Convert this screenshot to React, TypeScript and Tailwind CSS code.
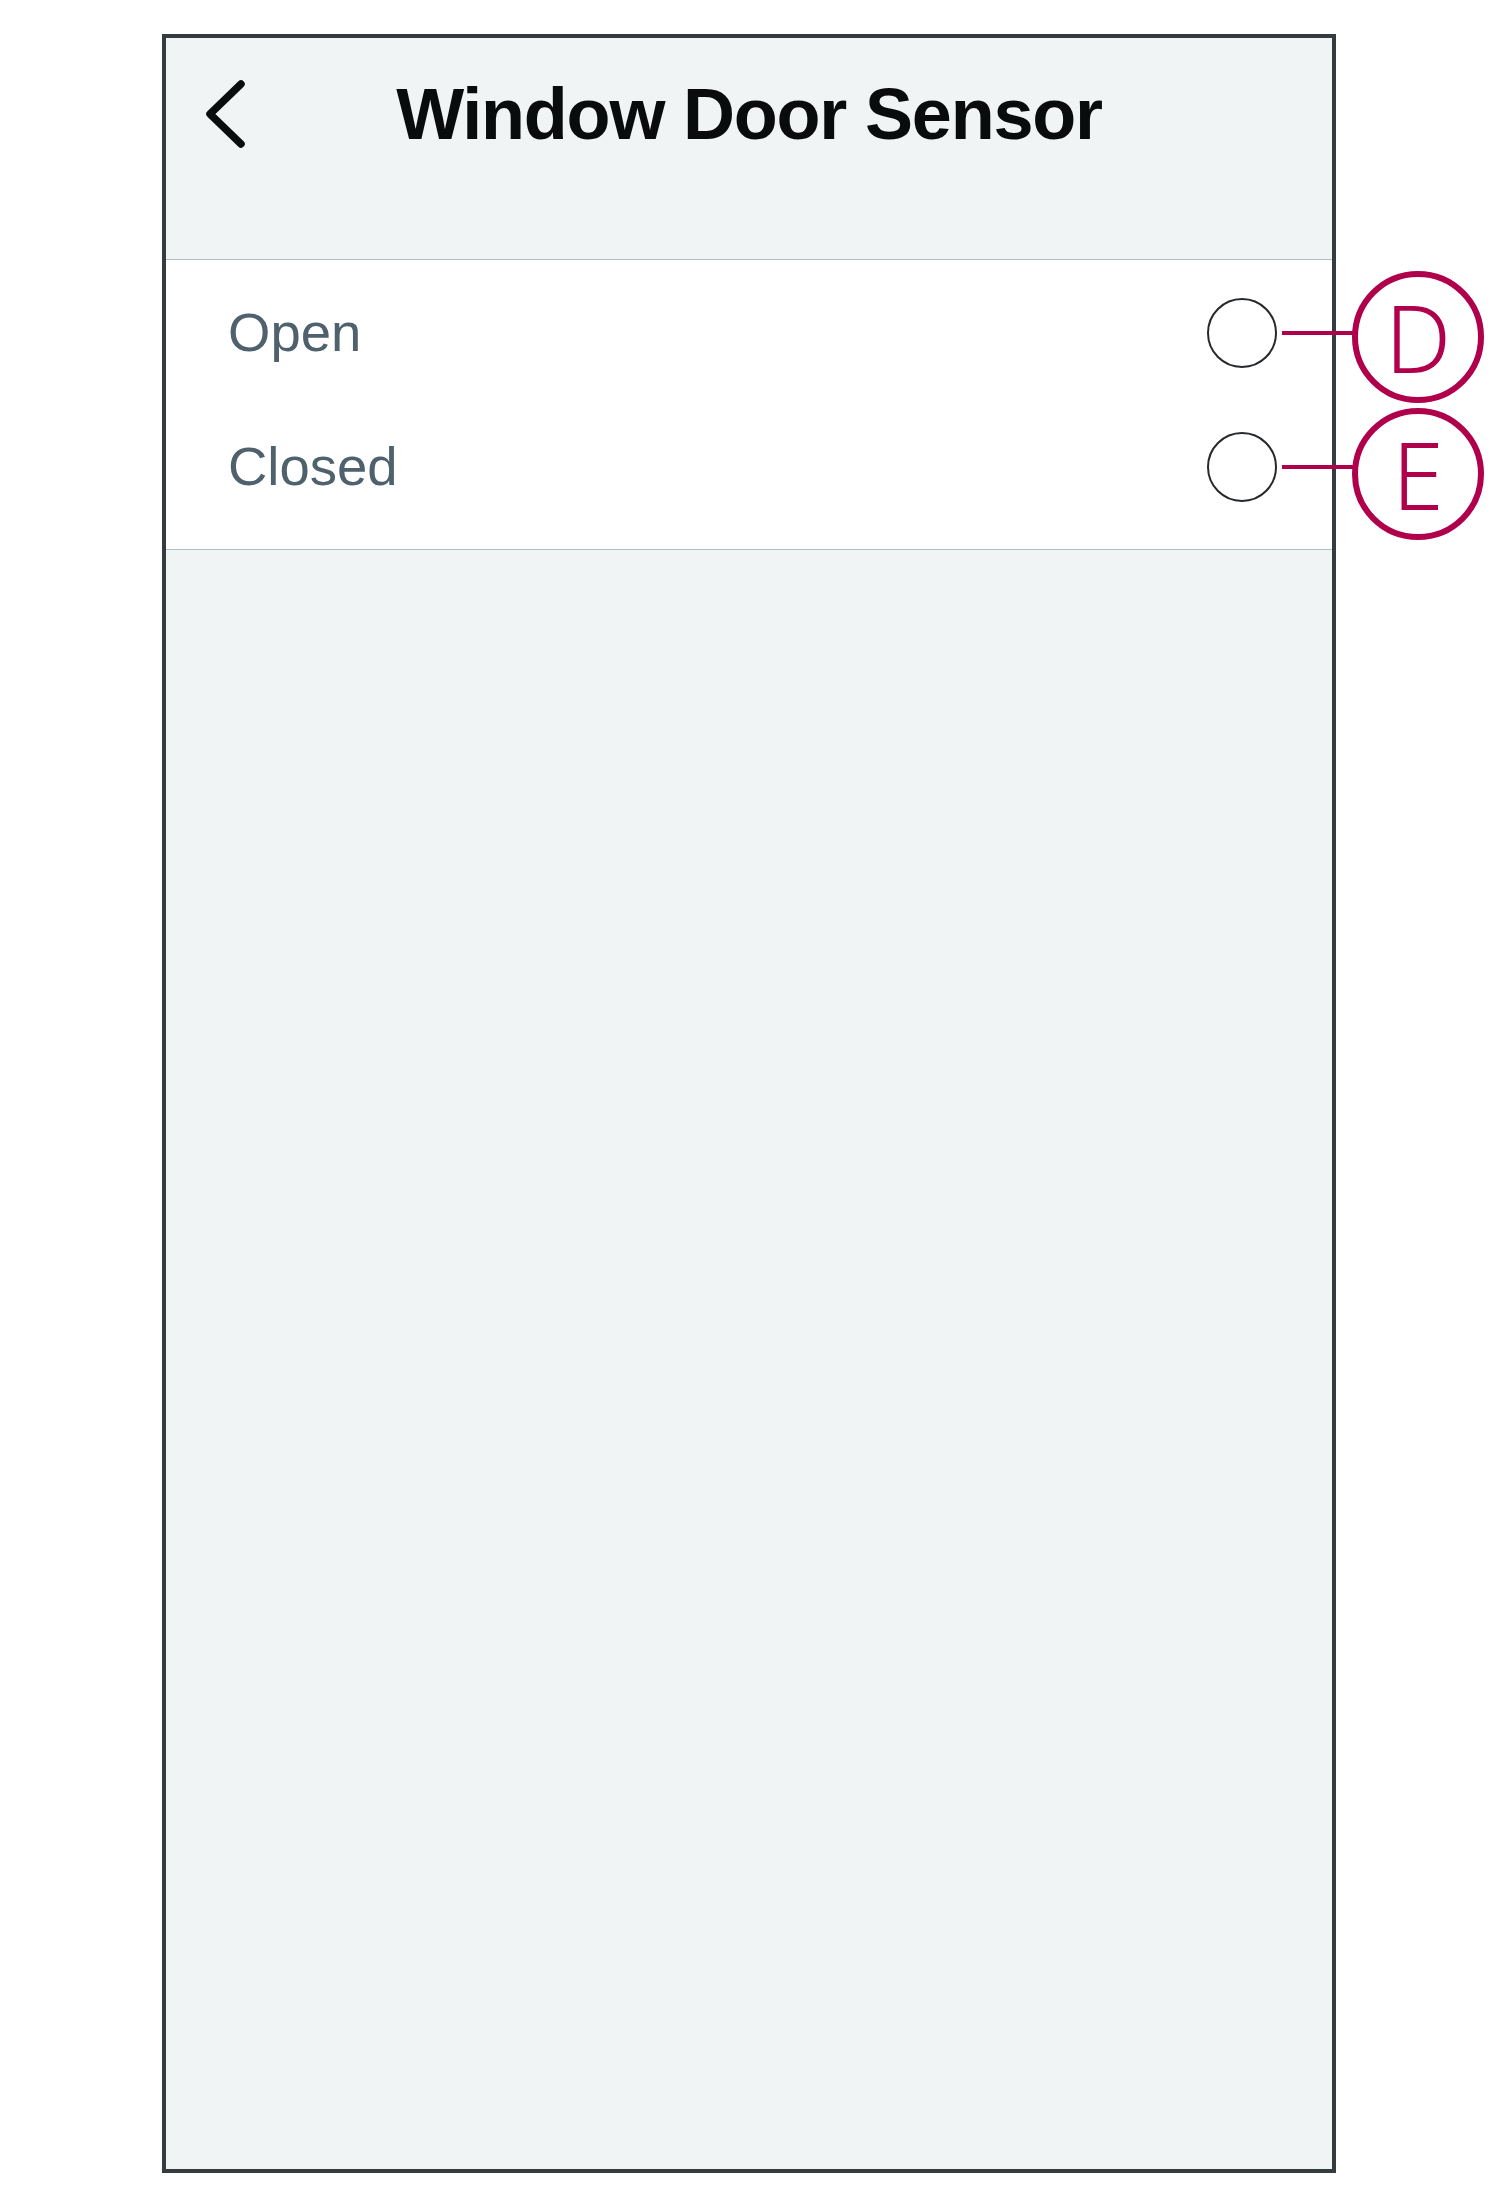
import React from 'react';

type Option = { label: string; tag: string; offset: string };

const options: Option[] = [
  { label: 'Open', tag: 'D', offset: 'top-[4px]' },
  { label: 'Closed', tag: 'E', offset: 'top-[7px]' },
];

const BackChevron: React.FC = () => (
  <svg width="42" height="70" viewBox="0 0 42 70" fill="none">
    <path d="M36 5 L5 35 L36 65" stroke="#0b0c0e" strokeWidth="7.5" strokeLinecap="round" strokeLinejoin="round" />
  </svg>
);

const OptionRow: React.FC<{ option: Option }> = ({ option }) => (
  <div className="relative flex h-[134px] items-center justify-between pl-[62px] pr-[55px]">
    <span className="text-[54.5px] leading-none text-[#4e616c]">{option.label}</span>
    <span className="h-[70px] w-[70px] rounded-full border-2 border-[#26292c] bg-white" />

    {/* annotation callout */}
    <div className="absolute left-[1116px] top-0 flex h-full items-center">
      <div className="h-[4px] w-[72px] bg-[#b0004b]" />
    </div>
    <div className={`absolute left-[1186px] ${option.offset} flex h-full items-center`}>
      <div className="flex h-[132px] w-[132px] items-center justify-center rounded-full border-[6px] border-[#b0004b] bg-white">
        <span className="text-[93px] font-light leading-none text-[#b0004b]" style={{ fontFamily: '"Noto Sans", sans-serif' }}>
          {option.tag}
        </span>
      </div>
    </div>
  </div>
);

const App: React.FC = () => {
  return (
    <div className="min-h-[2208px] w-full bg-white pt-[34px] pl-[162px]" style={{ fontFamily: '"Liberation Sans", Arial, sans-serif' }}>
      <div className="flex h-[2139px] w-[1174px] flex-col border-4 border-[#343c41] bg-[#f0f4f5]">
        {/* header */}
        <div className="h-[222px] border-b-[1.5px] border-[#aebfc6]">
          <div className="grid h-[152px] grid-cols-[1fr_auto_1fr] items-center">
            <div className="pl-[39px]">
              <BackChevron />
            </div>
            <h1 className="text-[72px] font-bold leading-none tracking-[-1.2px] text-[#0a0b0d]">Window Door Sensor</h1>
            <div />
          </div>
        </div>

        {/* options */}
        <div className="border-b-[1.5px] border-[#aebfc6] bg-white pt-[6px] pb-[15px]">
          {options.map((o) => (
            <OptionRow key={o.tag} option={o} />
          ))}
        </div>

        <div className="flex-1" />
      </div>
    </div>
  );
};

export default App;
